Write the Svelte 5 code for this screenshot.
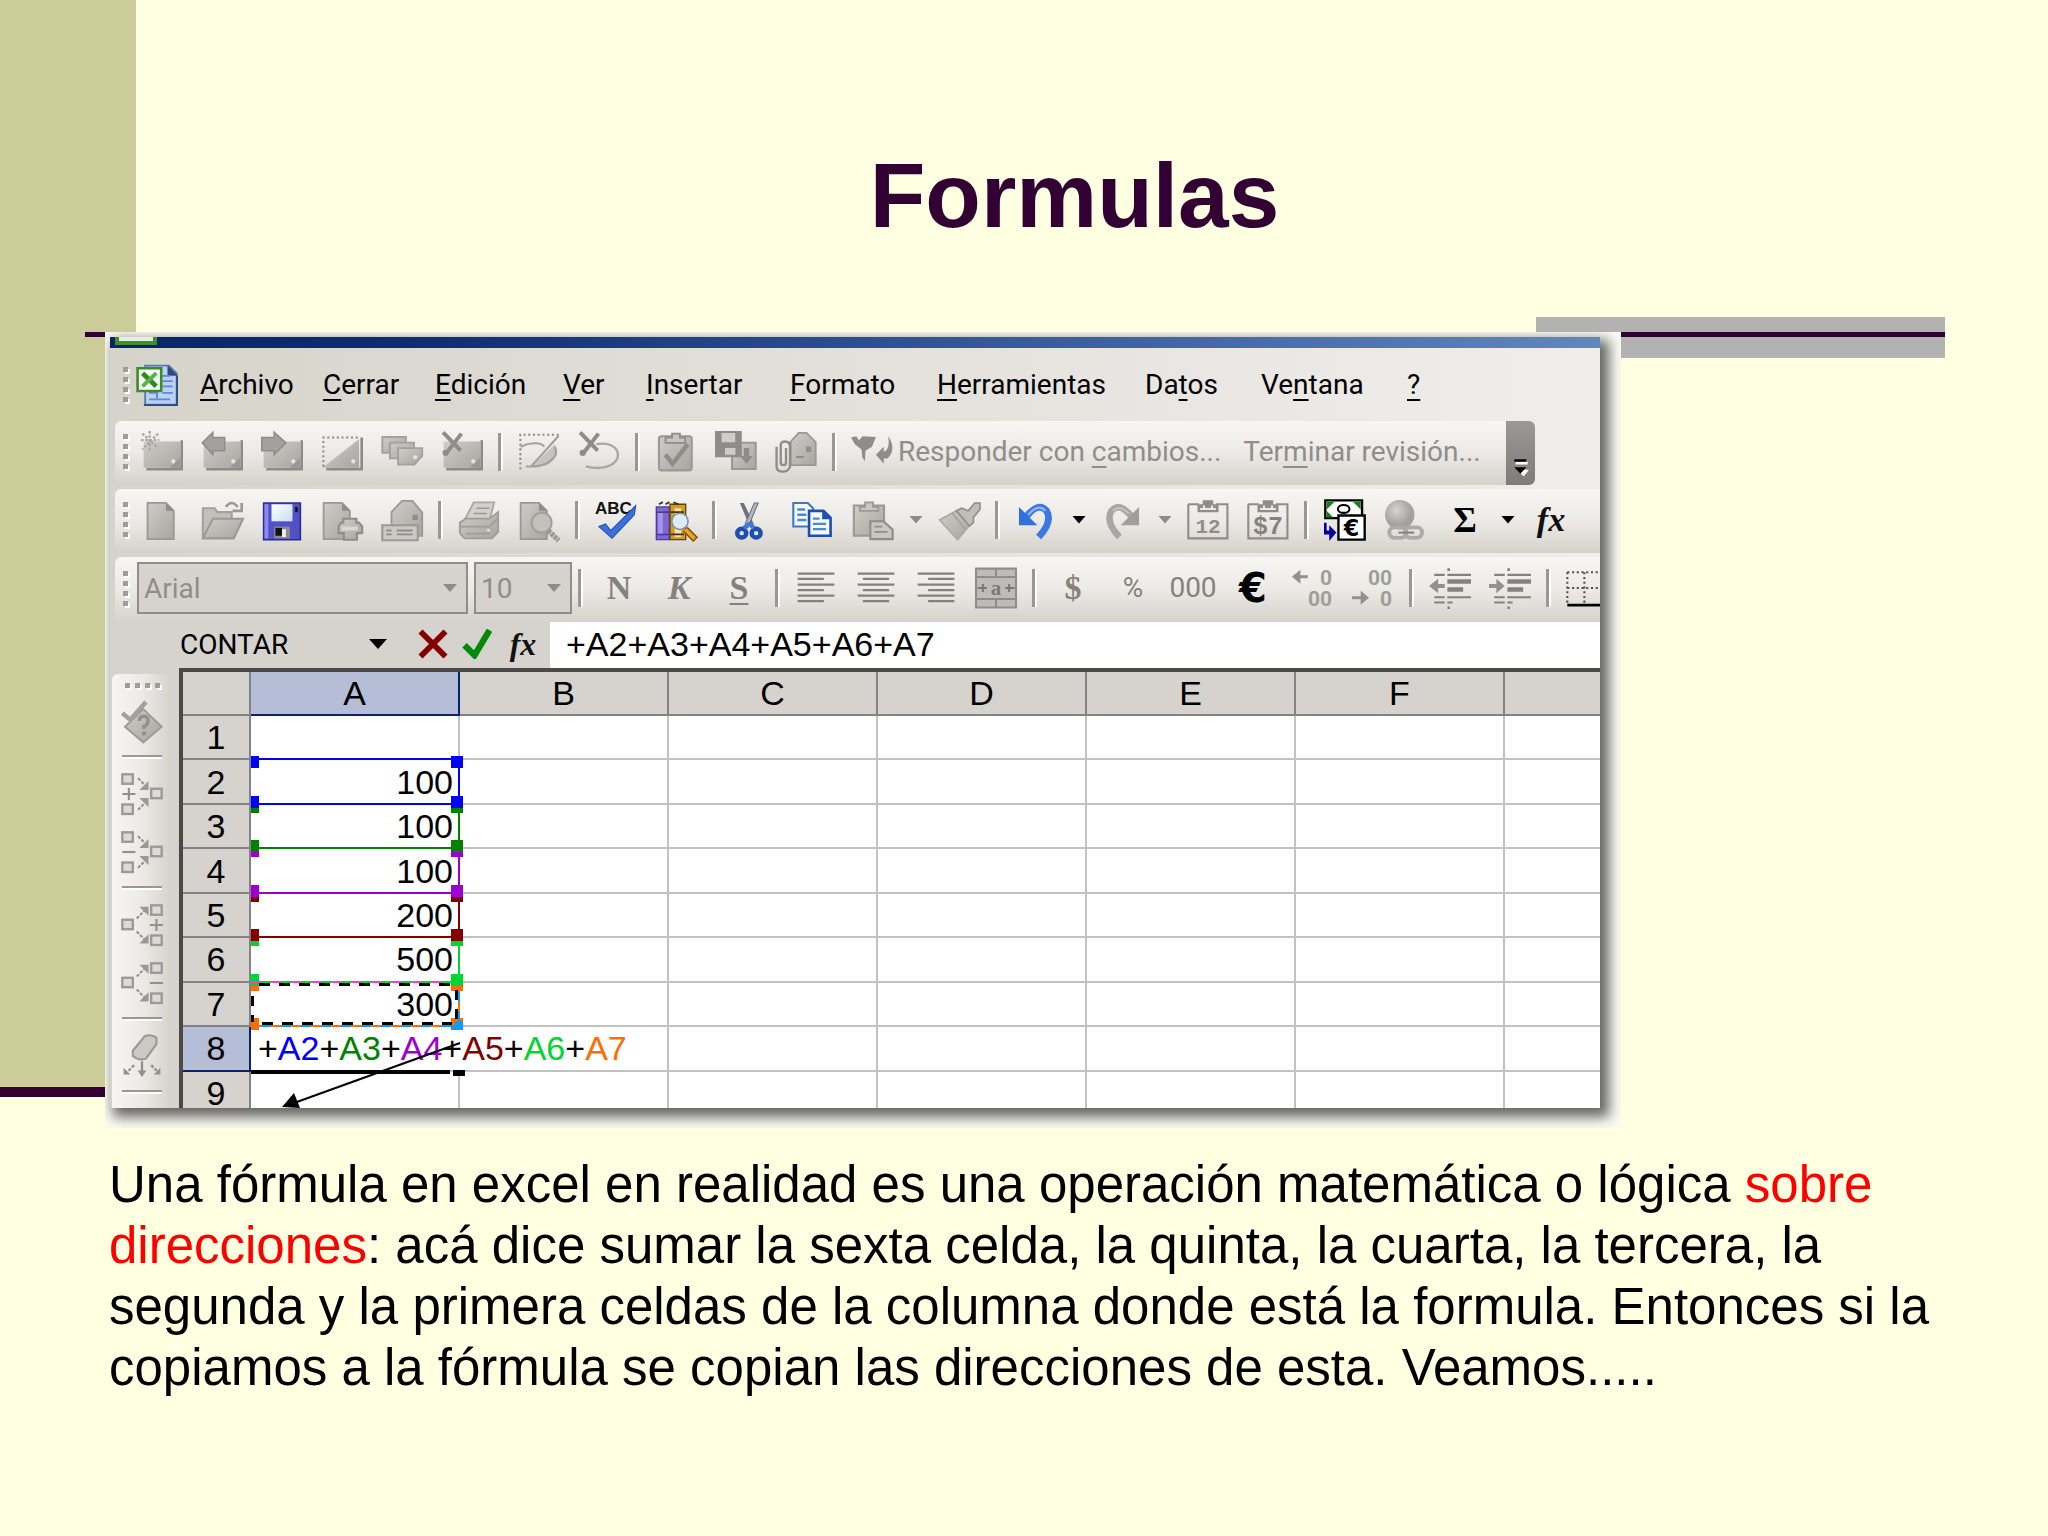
<script>
    const menus = [
        ["", "A", "rchivo"],
        ["", "C", "errar"],
        ["", "E", "dición"],
        ["", "V", "er"],
        ["", "I", "nsertar"],
        ["", "F", "ormato"],
        ["", "H", "erramientas"],
        ["Da", "t", "os"],
        ["Ve", "n", "tana"],
        ["", "?", ""],
    ];

    const note = `<path fill="#8d8b87" d="M15 3.5h1V15H2v-1h13z"/><path fill="url(#grey)" d="M1 4h14v10H1z"/><path fill="#9a9894" d="M11 14l4-4v4z"/><circle cx="12.3" cy="11.6" r=".8" fill="#e6e4e0"/>`;
    const cross = `<path stroke="#8f8d89" stroke-width="1.5" fill="none" d="M.8.5 7.5 7.5M7.8 1 2 8.5"/><circle cx="1.8" cy="8.3" r="1.2" fill="#8f8d89"/>`;
    const page = `<path fill="url(#grey)" stroke="#9b9995" stroke-width=".7" d="M2.5 1.5h7l3 3v10.8h-10z"/><path fill="#8f8d89" d="M9.5 1.5v3h3z"/>`;
    const clipboard = `<path fill="none" stroke="#8f8d89" stroke-width=".8" d="M.5 2h4M11 2h4.4v13H.5V2"/><path fill="#8f8d89" d="M6 .5h4V2h2v3H4V2h2z"/><path stroke="#eceae6" stroke-width=".8" d="M5 3.8h6M6.5 2.5v1.3M9.5 2.5v1.3"/>`;
    const indent = `<path stroke="#85827e" stroke-width=".8" d="M2 3h4M2 11.5h4M2 13.5h4M7 3h9M7 11.5h9M7 13.5h2"/><path stroke="#85827e" stroke-width="1.7" d="M7 5.5h9M7 8.6h6"/><path fill="#85827e" d="M7 .5h1v1H7zM7 15h1v1H7z"/>`;
    const box = (x, y) => `<rect x="${x}" y="${y}" width="4" height="3.6" fill="#dddbd7" stroke="#9c9a96" stroke-width=".9"/>`;

    const icons = {
        noteNew: `${note}<path stroke="#aaa8a3" stroke-width=".9" stroke-dasharray="1 .6" d="M0 3.5h7M3.3 0v8M.5 1l6 5.5M6.5 1l-6 6"/>`,
        notePrev: `${note}<path fill="#a3a19d" stroke="#8f8d89" stroke-width=".6" d="M.5 4.5 4.5.5v2H9v5H4.5v1.5z"/>`,
        noteNext: `${note}<path fill="#a3a19d" stroke="#8f8d89" stroke-width=".6" d="M9.5 4.5 5 .5v2H.3v5H5v1.5z"/>`,
        noteShow: `<path fill="#8d8b87" d="M15 2.5h1V15H2v-1h13z"/><path fill="url(#grey)" d="M1 13.7 14.5 3v11H1z"/><path fill="none" stroke="#8f8d89" stroke-width=".8" stroke-dasharray=".8 1" d="M14 2.5H.9v12"/><circle cx="12.3" cy="11.6" r=".8" fill="#e6e4e0"/>`,
        noteAll: `<g fill="url(#grey)" stroke="#a3a19d" stroke-width=".7"><path d="M.5 2.3h9v6h-9z"/><path d="M3.4 4.4h9.2v6H3.4z"/><path d="M6.5 6.5h9.2v3l-3 3.3H6.5z"/></g><circle cx="13" cy="10" r=".8" fill="#e6e4e0"/>`,
        noteDel: `${note}${cross}`,
        inkShow: `<path fill="none" stroke="#8f8d89" stroke-width=".8" stroke-dasharray=".8 1" d="M15.5 1.4H.9v13.5"/><path fill="#c6c4bf" d="M5 14 14 5c2 3 .6 6-3 8z"/><path fill="none" stroke="#a3a19d" stroke-width=".8" d="M1 6c4-2 8-1.500 9 0M15.500 1.800 5 13.500M14 6c2 4-3 8-11 7.500"/>`,
        inkDel: `<path fill="none" stroke="#a9a7a3" stroke-width=".9" d="M7 5c6-1 9 2 8 5.500-1.500 3-6 4.500-12 3"/>${cross}`,
        task: `<rect x="1.500" y="2" width="12.500" height="13" rx="1" fill="url(#grey)" stroke="#9b9995" stroke-width=".8"/><path fill="#c8c6c1" stroke="#8f8d89" stroke-width=".7" d="M4 4.500h7.500v-2H9.500V1h-3v1.500H4z"/><path fill="none" stroke="#8f8d89" stroke-width="1.700" d="m4 9 2.700 3.500L12.500 5"/>`,
        saveTo: `<path fill="url(#grey)" stroke="#9b9995" stroke-width=".8" d="M6.500 4.500h9v10h-9z"/><path fill="#8f8d89" d="M0 0h10.200v10H0z"/><path fill="#cfcdc8" d="M2.500.8h5.200v3.500H2.500zM3.800 6.500h4V9h-4z"/><path fill="#8f8d89" d="M11 6.500h2v3h1.500L12 12.500 9.500 9.500H11z"/>`,
        attach: `<path fill="url(#grey)" stroke="#9b9995" stroke-width=".7" d="M6 4 9 .7h3l3.500 3.500V13H6z"/><path fill="#8f8d89" d="M11.800 6h2v2h-2zM8 9.500h3v.8H8z"/><path fill="none" stroke="#8f8d89" stroke-width=".9" d="M.6 6v7.500q0 2 2.300 2t2.800-2V6q0-2-1.900-2T2.200 6v6q0 1 1 1t1-1V6.500"/>`,
        reply: `<path fill="#8f8d89" d="M0 2.500 2 2l1 1.500L4.500 2l5 .3L8 6 5.500 7.500l-.2 4-1-1.500L4 7 1.500 5zM9.500 9 12.500 6V8q2.500-1 1.700-6 3.300 5-.3 8.500h-1.400v2z"/>`,
        newPage: page,
        open: `<path fill="#c2c0bb" stroke="#a3a19d" stroke-width=".8" d="M.7 14.500v-11h4.500l1 1.500h5.500v3"/><path fill="url(#grey)" stroke="#9b9995" stroke-width=".8" d="m.7 15 3.800-7.500H16L12.500 15z"/><path fill="none" stroke="#9b9995" d="M9.500 3q2-3 4.500 0M15.500 1.500v3H12"/>`,
        save: `<path fill="#5150c4" stroke="#2b2b94" stroke-width=".6" d="M1 1.500h14v14H1z"/><path fill="#8a8af0" d="M1.300 2h1.500v13H1.300z"/><path fill="url(#label)" d="M4 2h8v6.500H4z"/><path fill="#8c8c8c" d="M5 10.500h6V15H5z"/><path fill="#111" d="M5.500 11H8v3H5.500z"/><path fill="#eee" d="M8 11.500h1.500v3H8z"/><path fill="#111" d="M13 3h1v2h-1z"/>`,
        permission: `<g transform="translate(-1.500 0)">${page}</g><path fill="url(#grey)" stroke="#8f8d89" stroke-width=".8" d="M8.500 9V7.500h5V9h1l1.200 1.500V13h-2v2.500h-5V13h-2v-2.500L7.700 9z"/><path fill="#d9d7d2" d="M8 10.500h6V12H8z"/>`,
        mail: `<path fill="url(#grey)" stroke="#9b9995" stroke-width=".7" d="M4 14V5L8 .7h4l3.700 4.500V14z"/><path fill="#8f8d89" d="M12 6h2v2h-2z"/><path fill="#cbc9c4" stroke="#9b9995" stroke-width=".8" d="M.5 10H14v5.700H.5z"/><path stroke="#8f8d89" stroke-width=".7" d="M2 12h2M2 13.500h2M6 12h6M6 13.500h6"/>`,
        print: `<path fill="#d3d1cc" stroke="#a9a7a2" stroke-width=".7" d="M2.500 8 6 1.300h7.800L12 8z"/><path stroke="#9b9995" stroke-width=".6" d="M7 3.500h5M6 5.500h5"/><path fill="url(#grey)" stroke="#9f9d99" stroke-width=".7" d="M.7 9 3 7.500h9L15.300 5v7.500L13 15H2.500L.7 13z"/><path fill="none" stroke="#9f9d99" stroke-width=".7" d="M1 10.500h11l3-3M3 13.200h9"/><path fill="#e6e4e0" d="M11 11.500h1.200v.8H11z"/>`,
        preview: `<g transform="translate(-1.500 0)">${page}</g><circle cx="9" cy="9" r="3.800" fill="#c3c1bc" stroke="#a3a19d" stroke-width=".8"/><path stroke="#9b9995" stroke-width="2" stroke-dasharray="1.300 .3" d="m11.500 12 4 3.800"/>`,
        spell: `<text x="0" y="5.600" font-family="Liberation Sans" font-weight="bold" font-size="6.500" fill="#111">ABC</text><path fill="#3a6fdc" stroke="#2350b4" stroke-width=".4" d="M1.500 10.500 4 9.500l2 2.500 9.500-9.500-.5 3.500L6.500 15z"/>`,
        research: `<path fill="#7d67d2" stroke="#4a3a9c" stroke-width=".5" d="M.5 3h5v12.500h-5z"/><path fill="#a595ea" d="M1.200 4.500H3v9H1.200z"/><path stroke="#4a3a9c" stroke-width=".6" d="M.5 5h5M.5 13.500h5"/><path fill="#d89c22" stroke="#5b430e" stroke-width=".5" d="M5.700 2h6v13.500h-6z"/><path fill="#f2e3b4" d="M7.500 3.500h2.500v11H7.500z"/><path fill="none" stroke="#443311" stroke-width=".7" d="M6 5h5M6 13.500h5M1.500 2l1.500-.8M4 2l1.500-.8M7 1.300l2 .7"/><circle cx="9.500" cy="8.500" r="3.100" fill="#dcecf8" stroke="#7f93a6" stroke-width=".6"/><path stroke="#7c5410" stroke-width="2.600" d="m11.500 11.500 4 4"/><path stroke="#e9a520" stroke-width="1.400" d="m11.500 11.500 3.600 3.600"/>`,
        cut: `<path fill="#69727e" d="M3 1.500 7 11l1.300-1.500L4.500 1.500z"/><path fill="#b1b8c0" stroke="#69727e" stroke-width=".4" d="M10 1.500 6 11 5 9.500 8.500 1.500z"/><g fill="none" stroke="#1f4fae" stroke-width="1.700"><circle cx="3.700" cy="13" r="1.700"/><circle cx="9.200" cy="13" r="1.700"/></g><path fill="none" stroke="#3f78dd" stroke-width="1.500" d="m4.500 11 2-1.500L8.500 11"/>`,
        copy: `<g fill="#f4faff" stroke="#3f78bb" stroke-width=".8"><path d="M.5 1.500h5.500l2 2v7H.5z"/><path stroke="#1f4fae" stroke-width="1" d="M6.500 4.500h5.500l2.700 2.700v6.800H6.500z"/></g><path fill="#1f4fae" d="M11.500 4.500v3.200h3.200z"/><path stroke="#4b88d5" stroke-width=".9" d="M2 4h3M2 6h3.500M2 8h3.500M8 7.500h2.500M8 9.500h5M8 11.500h5"/>`,
        paste: `<path fill="url(#grey)" stroke="#9b9995" stroke-width=".8" d="M.7 2.500h11.500V14H.7z"/><path fill="#c9c7c2" stroke="#9b9995" stroke-width=".7" d="M3 4.500h7V3H8V1.300H5V3H3z"/><path fill="#c9c7c2" stroke="#8f8d89" stroke-width=".8" d="M7 8.500h5l3.500 3.200v3.600H7z"/><path stroke="#8f8d89" stroke-width=".7" d="M8.500 10.500h3M8.500 12.500h5"/>`,
        brush: `<path fill="url(#grey)" stroke="#aaa8a3" stroke-width=".6" d="M.6 8 7 4.500l5 5.500-4.500 5.500z"/><path fill="#c0beb9" stroke="#8f8d89" stroke-width=".6" d="m7 4.500 2-1 2.500 1L14 1.500h2V4l-2.500 3v2L12 10.300z"/><path stroke="#a3a19d" stroke-width=".6" d="m5.500 5.500 5 6"/>`,
        undo: `<path fill="none" stroke="#3c78e4" stroke-width="2.600" d="M4.500 6.500Q9 1 12 4.500q2.500 4-3 10"/><path fill="#3470dc" d="M1.500 3v7h7z"/><path fill="none" stroke="#8eb8f7" stroke-width=".8" d="M5 6Q9 1.500 11.500 4.500"/>`,
        redo: `<path fill="none" stroke="#a9a7a3" stroke-width="2.500" d="M11.500 6.500Q7 1 4 4.500q-2.500 4 3 10"/><path fill="#a09e9a" d="M14.500 3v7h-7z"/><path fill="none" stroke="#c9c7c2" stroke-width=".7" d="M10.500 5.500Q7 2 4.600 4.500"/>`,
        cal: `${clipboard}<text x="8" y="13" text-anchor="middle" font-family="Liberation Mono" font-weight="bold" font-size="8" fill="#918e8a">12</text>`,
        cal7: `${clipboard}<text x="8" y="13.200" text-anchor="middle" font-family="Liberation Mono" font-weight="bold" font-size="9.500" fill="#85827e">$7</text>`,
        convert: `<path fill="#fff" stroke="#000" stroke-width=".9" d="M.5.500h14v6.800H.5z"/><path fill="#138413" d="M1 1h3L1 4zM14 1h-3l3 3zM1 7V4.500L3.500 7z"/><ellipse cx="7.500" cy="3.800" rx="2.200" ry="1.500" fill="none" stroke="#000" stroke-width=".8"/><path fill="#fff" stroke="#000" stroke-width=".9" d="M5.500 6.300h10v9.200h-10z"/><text x="10.500" y="14" text-anchor="middle" font-family="DejaVu Sans" font-weight="bold" font-size="8.500">€</text><path fill="#00009a" d="M0 9h1v3h1v-2l2.700 2.800L2 16v-2.500H0z"/>`,
        link: `<circle cx="6" cy="6" r="5.600" fill="url(#ball)"/><g fill="none" stroke="#adaba7" stroke-width="1.500"><rect x="2" y="10.800" width="6.500" height="4" rx="2"/><rect x="8" y="10.800" width="6.500" height="4" rx="2"/></g><path stroke="#85827e" stroke-width=".8" d="M5.500 12.800h6"/>`,
        left: `<path stroke="#85827e" stroke-width=".9" d="M1 2.500h14M1 4.500h10M1 6.700h14M1 8.800h10M1 10.900h14M1 13h10"/>`,
        center: `<path stroke="#85827e" stroke-width=".9" d="M1 2.500h14M3 4.500h10M1 6.700h14M3 8.800h10M1 10.900h14M3 13h10"/>`,
        right: `<path stroke="#85827e" stroke-width=".9" d="M1 2.500h14M5 4.500h10M1 6.700h14M5 8.800h10M1 10.900h14M5 13h10"/>`,
        merge: `<path fill="#bebcb8" stroke="#8f8d89" stroke-width=".8" d="M.4.6h15.200v14.800H.4zM.4 3.800h15.200M.4 12.200h15.200M8 .6v3.200M8 12.200v3.200"/><text x="8" y="10.500" text-anchor="middle" font-family="Liberation Serif" font-weight="bold" font-size="8" fill="#7b7975">a</text><path stroke="#7b7975" stroke-width=".8" d="M1 8h3.500M11.500 8H15M3 6.500v3M13 6.500v3"/>`,
        addDec: `<path fill="#93918d" d="M0 3.700 3.200 1V3.100H6v1.200H3.200v2.100z"/><text x="10.700" y="7" font-family="Roboto" font-weight="bold" font-size="8" fill="#a09e9a">0</text><text x="6.100" y="14.700" font-family="Roboto" font-weight="bold" font-size="8" fill="#a09e9a">00</text>`,
        delDec: `<path fill="#93918d" d="M6.500 11.700 3.300 9v2.100H0v1.200h3.300v2.100z"/><text x="6.100" y="7" font-family="Roboto" font-weight="bold" font-size="8" fill="#a09e9a">00</text><text x="10.700" y="14.700" font-family="Roboto" font-weight="bold" font-size="8" fill="#a09e9a">0</text>`,
        outdent: `${indent}<path fill="#93918d" d="M0 7.200 3.500 4.500v2H6v1.500H3.500v2z"/>`,
        indent: `${indent}<path fill="#93918d" d="M6 7.200 2.800 4.500v2H0v1.500h2.800v2z"/>`,
        borders: `<path fill="none" stroke="#55534f" stroke-width=".8" stroke-dasharray=".8 1" d="M.5 2h16M.5 2v12M7 2v12M.5 8h16M13.500 2v12"/><path stroke="#000" stroke-width="1" d="M.5 14.500H16"/>`,
        excel: `<path fill="#bcd0f4" stroke="#5877ae" stroke-width=".7" d="M3.500.6h9l3 3v11.900h-12z"/><path fill="#2c4c7d" d="M12 .5v4h4zM15.300 4h.7v12H3v-.7h12.300z"/><path fill="none" stroke="#5f88d6" stroke-width=".7" d="M10 4.500h3M10 6.500h4M10 8.500h4M5 11h3v2M10 11h4M5 13.500h8"/><path fill="#f3fff0" stroke="#3c8d28" stroke-width="1" d="M.6 1.600h9v8.700h-9z"/><path stroke="#2f8a1f" stroke-width="1.800" d="m2.500 3.500 5.200 5"/><path stroke="#5bb04a" stroke-width="1.500" d="M7.700 3.500 2.500 8.500"/>`,
        audit: `<path fill="url(#grey)" stroke="#9b9995" stroke-width=".7" d="m8.500 3.500 7 6.700-7 6-7-6z"/><path fill="none" stroke="#a3a19d" stroke-width="1.700" d="m.5 5 3 2.500L9.500.8"/><path fill="none" stroke="#93918d" stroke-width="1.300" d="M7 8q0-1.800 1.700-1.800T10.300 8 8.700 10v1"/><path fill="#93918d" d="M8 12h1.600v1.500H8z"/>`,
        tracePrecAdd: `${box(0.5, 0.5)}${box(0.5, 12)}${box(11.5, 6)}<path stroke="#93918d" stroke-width=".8" d="M.5 8h5M3 5.700v4.600"/><path stroke="#93918d" stroke-width=".8" stroke-dasharray="1.200 .6" d="m6.500 2 3.500 3.500M6.500 14 10 10.500"/><path fill="#9b9995" d="M10.500 3v3.500H7zM10.500 13V9.500H7z"/>`,
        tracePrecDel: `${box(0.5, 0.5)}${box(0.5, 12)}${box(11.5, 6)}<path stroke="#93918d" stroke-width=".8" d="M.5 8h5"/><path stroke="#93918d" stroke-width=".8" stroke-dasharray="1.200 .6" d="m6.500 2 3.500 3.500M6.500 14 10 10.500"/><path fill="#9b9995" d="M10.500 3v3.500H7zM10.500 13V9.500H7z"/>`,
        traceDepAdd: `${box(0.5, 6)}${box(11.5, 0.5)}${box(11.5, 12)}<path stroke="#93918d" stroke-width=".8" d="M11 8h5M13.500 5.700v4.600"/><path stroke="#93918d" stroke-width=".8" stroke-dasharray="1.200 .6" d="M6 5.500 9.500 2M6 10.500 9.500 14"/><path fill="#9b9995" d="M7 1h3.500v3.500zM7 15h3.500v-3.500z"/>`,
        traceDepDel: `${box(0.5, 6)}${box(11.5, 0.5)}${box(11.5, 12)}<path stroke="#93918d" stroke-width=".8" d="M11 8h5"/><path stroke="#93918d" stroke-width=".8" stroke-dasharray="1.200 .6" d="M6 5.500 9.500 2M6 10.500 9.500 14"/><path fill="#9b9995" d="M7 1h3.500v3.500zM7 15h3.500v-3.500z"/>`,
        eraser: `<path fill="#cbc9c4" stroke="#9b9995" stroke-width=".8" d="M4.500 6 9 .5q2.500-1 4.500.5v2.500L9.500 9q-2.500 1-5-1z"/><path stroke="#93918d" stroke-width=".9" d="M8 10v5"/><path stroke="#93918d" stroke-width=".9" stroke-dasharray="1.200 .6" d="m5 11.500-3 3M11.500 11.500l3 3"/><path fill="#93918d" d="M6.300 13.500h3.400L8 16zM1 12.500V15h2.500zM15 12.500V15h-2.500z"/>`,
    };

    const reviewBar = ["noteNew", "notePrev", "noteNext", "noteShow", "noteAll", "noteDel", "|", "inkShow", "inkDel", "|", "task", "saveTo", "attach", "|"];
    const standardBar = [
        "newPage", "open", "save", "permission", "mail", "|", "print", "preview", "|", "spell", "research", "|",
        "cut", "copy", "paste", "v", "brush", "|", "undo", "V", "redo", "v", "cal", "cal7", "|",
        "convert", "link", "Σ", "V", "fx",
    ];
    const formatBar = ["|", "N", "K", "S", "|", "left", "center", "right", "merge", "|", "$", "%", "000", "€", "addDec", "delDec", "|", "outdent", "indent", "|", "borders"];
    const auditBar = ["audit", "|", "tracePrecAdd", "tracePrecDel", "|", "traceDepAdd", "traceDepDel", "|", "eraser", "|"];
    const glyphs = { N: "bold", K: "bold italic", S: "bold under", $: "bold", "%": "light", "000": "light", "€": "euro", Σ: "sigma", fx: "fx" };

    const columns = ["A", "B", "C", "D", "E", "F", ""];
    const rows = ["", "100", "100", "100", "200", "500", "300", "", ""];
    const refs = [
        { name: "A2", color: "#0000ff" },
        { name: "A3", color: "#008200" },
        { name: "A4", color: "#9c00ce" },
        { name: "A5", color: "#840000" },
        { name: "A6", color: "#00d532" },
        { name: "A7", color: "#ff6d00" },
    ];
    // row edges inside the sheet, from the top of row 2 to the bottom of row 8
    const edges = [87, 132, 176, 221, 265, 310, 354, 399];

    let formula = "+A2+A3+A4+A5+A6+A7";
</script>

{#snippet tool(name)}
    {#if name === "|"}
        <span class="sep"></span>
    {:else if name === "v" || name === "V"}
        <button class="drop" class:off={name === "v"} aria-label="Más opciones"></button>
    {:else if glyphs[name]}
        <button class="tool glyph {glyphs[name]}">{name}</button>
    {:else}
        <button class="tool" aria-label={name}>
            <svg class="icon" viewBox="0 0 16 16">{@html icons[name]}</svg>
        </button>
    {/if}
{/snippet}

{#snippet grip()}
    <span class="grip"><i></i><i></i><i></i><i></i></span>
{/snippet}

<svg class="defs" aria-hidden="true">
    <defs>
        <linearGradient id="grey" x1="0" y1="0" x2="1" y2="1">
            <stop offset="0" stop-color="#cfcdc8" />
            <stop offset="1" stop-color="#a7a5a0" />
        </linearGradient>
        <linearGradient id="label" x1="0" y1="0" x2="1" y2="1">
            <stop offset="0" stop-color="#fff" />
            <stop offset="1" stop-color="#c8dcf0" />
        </linearGradient>
        <radialGradient id="ball" cx=".4" cy=".35">
            <stop offset="0" stop-color="#d6d4cf" />
            <stop offset="1" stop-color="#a3a19d" />
        </radialGradient>
    </defs>
</svg>

<main class="slide">
    <h1>Formulas</h1>

    <figure>
        <div class="window">
            <div class="titlebar"><span></span></div>

            <nav>
                {@render grip()}
                <svg class="icon" viewBox="0 0 16 16">{@html icons.excel}</svg>
                <div class="menus">
                    {#each menus as [before, key, after]}
                        <button>{before}<u>{key}</u>{after}</button>
                    {/each}
                </div>
            </nav>

            <div class="bars">
                <div class="review">
                    <div class="bar">
                        {@render grip()}
                        {#each reviewBar as name}{@render tool(name)}{/each}
                        <button class="reply">
                            <svg class="icon" viewBox="0 0 16 16">{@html icons.reply}</svg>
                            <span>Responder con <u>c</u>ambios...</span>
                        </button>
                        <button class="finish">Ter<u>m</u>inar revisión...</button>
                    </div>
                    <button class="overflow" aria-label="Opciones de barra">
                        <svg viewBox="0 0 12 14">
                            <path fill="#fff" d="M2 2h9v2H2zM3 8h9l-4 5z" />
                            <path d="M1 0h9v2H1zM1 6h9l-4.500 5z" />
                        </svg>
                    </button>
                </div>
                <div class="bar">
                    {@render grip()}
                    {#each standardBar as name}{@render tool(name)}{/each}
                </div>
                <div class="bar">
                    {@render grip()}
                    <label class="combo font">
                        <select aria-label="Fuente" disabled><option>Arial</option></select>
                    </label>
                    <label class="combo size">
                        <select aria-label="Tamaño" disabled><option>10</option></select>
                    </label>
                    {#each formatBar as name}{@render tool(name)}{/each}
                </div>
            </div>

            <div class="formula">
                <div class="formula-tools">
                    <label class="name-box">
                        <select aria-label="Función"><option>CONTAR</option></select>
                    </label>
                    <button aria-label="Cancelar">
                        <svg viewBox="0 0 12 12"><path fill="none" stroke="#840000" stroke-width="2.300" d="m1 1 10 10M11 1 1 11" /></svg>
                    </button>
                    <button aria-label="Introducir">
                        <svg viewBox="0 0 12 12"><path fill="none" stroke="#008a08" stroke-width="2.500" d="m1 6.500 4 4L11 .5" /></svg>
                    </button>
                    <button class="fx">fx</button>
                </div>
                <input aria-label="Barra de fórmulas" bind:value={formula} />
            </div>

            <div class="work">
                <div class="audit">
                    {@render grip()}
                    {#each auditBar as name}{@render tool(name)}{/each}
                </div>
                <div class="sheet">
                    <table>
                        <colgroup>
                            <col class="row-col" />
                            {#each columns as letter}<col class:data-col={letter} />{/each}
                        </colgroup>
                        <thead>
                            <tr>
                                <th></th>
                                {#each columns as letter}
                                    <th class:active={letter === "A"}>{letter}</th>
                                {/each}
                            </tr>
                        </thead>
                        <tbody>
                            {#each rows as value, i}
                                <tr>
                                    <th class:active={i === 7}>{i + 1}</th>
                                    {#if i === 7}
                                        <td class="editing" colspan="2">
                                            {#each refs as ref}+<span style="color: {ref.color}">{ref.name}</span>{/each}
                                        </td>
                                    {:else}
                                        <td>{value}</td>
                                        <td></td>
                                    {/if}
                                    <td></td><td></td><td></td><td></td><td></td>
                                </tr>
                            {/each}
                        </tbody>
                    </table>

                    <svg class="ranges" viewBox="0 0 290 436" shape-rendering="crispEdges">
                        {#each refs.map((r, i) => ({ ...r, i })).reverse() as { color, i }}
                            <g fill={color}>
                                <rect x="68" y={edges[i] - 1} width="208" height="2" />
                                <rect x="68" y={edges[i + 1] - 1} width="208" height="2" />
                                <rect x="275" y={edges[i]} width="2" height="44" />
                                <rect x="68" y={edges[i] - 3} width="8" height="12" />
                                <rect x="68" y={edges[i + 1] - 8} width="8" height="12" />
                                <rect x="268" y={edges[i] - 3} width="12" height="12" />
                                <rect x="268" y={edges[i + 1] - 8} width="12" height="12" />
                            </g>
                        {/each}
                        <g fill="none" stroke-width="2">
                            <path stroke="#ff3ccc" stroke-dasharray="10 10" d="M68 310h200" />
                            <path stroke="#0a9cff" stroke-dasharray="10 10" d="M78 354h190M276 320v34" />
                            <path stroke="#000" stroke-width="3" stroke-dasharray="11 9" d="M76 312h192M79 351h190" />
                            <path stroke="#000" stroke-width="3" stroke-dasharray="10 9" d="M69 324v26M273 318v30" />
                        </g>
                        <path fill="#0a9cff" d="M272 349h8v9h-12v-5h4z" />
                        <path d="M68 398h199v4H68zM270 398h12v6h-12z" />
                    </svg>
                    <svg class="pointer" viewBox="0 0 180 68">
                        <path stroke="#000" stroke-width="2" d="M178 2 12 62" />
                        <path d="m0 66 12-14 6 15z" />
                    </svg>
                </div>
            </div>
        </div>
    </figure>

    <p>
        Una fórmula en excel en realidad es una operación matemática o lógica <em>sobre direcciones</em>: acá dice sumar la
        sexta celda, la quinta, la cuarta, la tercera, la segunda y la primera celdas de la columna donde está la formula.
        Entonces si la copiamos a la fórmula se copian las direcciones de esta. Veamos.....
    </p>
</main>

<style>
    :global(body) {
        margin: 0;
        background: #ffffe1;
    }

    .slide {
        min-height: 100vh;
        box-sizing: border-box;
        padding: 0 98px 60px 105px;
        font-family: "Liberation Sans", Arial, sans-serif;
        background:
            linear-gradient(#330033, #330033) right 103px top 332px / calc(100% - 188px) 5px no-repeat,
            linear-gradient(#b2b2b2, #b2b2b2) right 103px top 317px / 409px 41px no-repeat,
            linear-gradient(#330033, #330033) left top 1087px / 120px 10px no-repeat,
            linear-gradient(#cccc99, #cccc99) left top / 136px 1087px no-repeat,
            #ffffe1;
    }

    .defs {
        position: absolute;
        width: 0;
        height: 0;
    }

    h1 {
        margin: 0;
        padding: 144px 0 84px 94px;
        color: #330033;
        font-size: 91px;
        line-height: 104px;
        text-align: center;
    }

    figure {
        margin: 0 329px 0 0;
        padding: 5px 21px 20px 5px;
        overflow: hidden;
        background: #fbfbf4;
    }

    p {
        margin: 0;
        padding: 26px 0 0 4px;
        color: #000;
        font-size: 51px;
        line-height: 61px;
    }

    em {
        color: #ff0000;
        font-style: normal;
    }

    button,
    select,
    input {
        margin: 0;
        padding: 0;
        border: 0;
        border-radius: 0;
        background: none;
        color: inherit;
        font: inherit;
        appearance: none;
    }

    .window {
        overflow: hidden;
        background: linear-gradient(90deg, #d6d3ca, #f0eeec);
        box-shadow: 6px 6px 12px 3px rgba(0, 0, 0, 0.6);
        font-family: Roboto, "Open Sans", sans-serif;
        font-size: 28px;
    }

    .titlebar {
        height: 11px;
        padding-left: 5px;
        background: linear-gradient(90deg, #0a246a, #0f2b73 20%, #6286bd);
    }

    .titlebar span {
        display: block;
        box-sizing: border-box;
        width: 42px;
        height: 8px;
        border: 4px solid #3f8d32;
        border-top: 0;
        background: #e3f0dc;
    }

    nav {
        display: flex;
        align-items: center;
        height: 73px;
        padding-left: 13px;
    }

    .menus {
        display: grid;
        grid-template-columns: 123px 112px 128px 83px 144px 147px 208px 116px 146px auto;
        margin-left: 22px;
        justify-items: start;
    }

    u {
        text-decoration-thickness: 2px;
        text-underline-offset: 5px;
    }

    .grip {
        display: flex;
        flex: none;
        flex-direction: column;
        gap: 5px;
        width: 13px;
    }

    .grip i {
        width: 5px;
        height: 5px;
        background: #a09d98;
        box-shadow: 2px 2px #fff;
    }

    .icon {
        flex: none;
        width: 42px;
        height: 42px;
        overflow: visible;
    }

    .bars {
        display: grid;
        gap: 4px;
        padding-left: 5px;
    }

    .bar {
        display: flex;
        align-items: center;
        box-sizing: border-box;
        height: 64px;
        overflow: hidden;
        padding: 0 0 3px 8px;
        border-radius: 6px 0 0 6px;
        background: linear-gradient(#f8f6f3, #eceae6 50%, #d5d2cb);
    }

    .bar:last-child {
        height: 65px;
    }

    .tool {
        display: grid;
        flex: none;
        place-items: center;
        width: 60px;
        height: 48px;
    }

    .bar > .grip + .tool {
        margin-left: -4px;
    }

    .sep {
        flex: none;
        box-sizing: border-box;
        width: 17px;
        height: 38px;
        border-left: 6px solid transparent;
        background: linear-gradient(90deg, #9b9894 3px, #fff 3px 5px, transparent 5px) no-repeat;
    }

    .drop {
        display: grid;
        flex: none;
        place-items: center;
        width: 26px;
        height: 28px;
    }

    .drop::before,
    .combo::after,
    .name-box::after {
        content: "";
        width: 14px;
        height: 8px;
        background: #000;
        clip-path: polygon(0 0, 100% 0, 50% 100%);
    }

    .drop.off::before,
    .combo::after {
        background: #8f8b86;
    }

    .glyph {
        color: #85827e;
        font-family: "Liberation Serif", serif;
        font-size: 34px;
        line-height: 40px;
    }

    .bold {
        font-weight: bold;
    }

    .italic,
    .fx {
        font-style: italic;
    }

    .under {
        text-decoration: underline 2px;
        text-underline-offset: 4px;
    }

    .light {
        font-family: Roboto, sans-serif;
        font-size: 28px;
    }

    .euro {
        color: #000;
        font-family: "DejaVu Sans", sans-serif;
        font-size: 40px;
        font-weight: bold;
    }

    .sigma {
        color: #000;
        font-size: 36px;
        font-weight: bold;
    }

    .fx {
        color: #111;
        font-family: "Liberation Serif", serif;
        font-size: 34px;
        font-weight: bold;
    }

    .review {
        display: flex;
        margin-right: 65px;
    }

    .review .bar {
        flex: 1;
    }

    .reply {
        display: flex;
        flex: none;
        align-items: center;
        gap: 5px;
        margin-left: 8px;
    }

    .reply,
    .finish {
        color: #918d88;
        white-space: nowrap;
    }

    .finish {
        margin-left: 22px;
    }

    .overflow {
        display: flex;
        flex: none;
        align-items: flex-end;
        justify-content: center;
        box-sizing: border-box;
        width: 29px;
        height: 64px;
        padding-bottom: 7px;
        border-radius: 0 6px 6px 0;
        background: linear-gradient(#9a9996, #7d7c7a);
    }

    .overflow svg {
        width: 16px;
        height: 19px;
    }

    .combo,
    .name-box {
        display: grid;
        flex: none;
        align-items: center;
        justify-items: end;
    }

    .combo {
        box-sizing: border-box;
        height: 52px;
        margin-right: 6px;
        border: 2px solid #918e8a;
        background: #d6d3ce;
        color: #918d88;
    }

    .combo select,
    .combo::after,
    .name-box select,
    .name-box::after {
        grid-area: 1 / 1;
    }

    .combo::after {
        margin-right: 9px;
    }

    .combo select,
    .name-box select {
        width: 100%;
        padding-left: 5px;
        opacity: 1;
    }

    .font {
        width: 331px;
        margin-left: 1px;
    }

    .size {
        width: 98px;
        margin-right: 0;
    }

    .formula {
        display: flex;
        height: 46px;
        background: #fff;
    }

    .formula-tools {
        display: flex;
        align-items: center;
        box-sizing: border-box;
        width: 440px;
        padding: 0 0 2px 65px;
        background: #d6d3ce;
    }

    .name-box {
        width: 212px;
        margin-right: 31px;
    }

    .name-box::after {
        width: 18px;
        height: 10px;
    }

    .formula-tools button {
        width: 50px;
        text-align: left;
    }

    .formula-tools svg {
        display: block;
        width: 30px;
        height: 30px;
    }

    .formula-tools .fx {
        padding-left: 4px;
        font-size: 32px;
        line-height: 40px;
    }

    .formula input {
        flex: 1;
        min-width: 0;
        padding: 0 0 2px 16px;
        font-family: "Liberation Sans", Arial, sans-serif;
        font-size: 34px;
    }

    .work {
        display: flex;
        height: 440px;
        background: #d6d3ce;
    }

    .audit {
        display: flex;
        flex: none;
        flex-direction: column;
        align-items: center;
        width: 60px;
        margin: 6px 7px 0 2px;
        padding-top: 9px;
        box-sizing: border-box;
        border-radius: 6px 6px 0 0;
        background: linear-gradient(90deg, #f8f6f3, #eceae6 50%, #d5d2cb);
    }

    .audit .grip {
        flex-direction: row;
        width: 35px;
        margin-bottom: 4px;
    }

    .audit .tool {
        height: 58px;
    }

    .audit .sep {
        width: 40px;
        height: 15px;
        border-top: 5px solid transparent;
        border-left: 0;
        background: linear-gradient(#9b9894 2px, #fff 2px 4px, transparent 4px) no-repeat;
    }

    .sheet {
        position: relative;
        flex: 1;
        min-width: 0;
        overflow: hidden;
        border-top: 4px solid #4a4946;
        border-left: 4px solid #4a4946;
        background: #fff;
        font-family: "Liberation Sans", Arial, sans-serif;
        font-size: 34px;
    }

    table {
        width: 100%;
        height: 444px;
        border-spacing: 0;
        table-layout: fixed;
    }

    .row-col {
        width: 68px;
    }

    .data-col {
        width: 209px;
    }

    th,
    td {
        padding: 0 5px;
        border: 0 solid #c3c1c3;
        border-width: 0 2px 2px 0;
        line-height: 40px;
        text-align: right;
        white-space: nowrap;
    }

    thead th {
        height: 42px;
    }

    th {
        border-color: #848284;
        background: #d6d3ce;
        font-size: 34px;
        font-weight: normal;
        text-align: center;
    }

    tr > :last-child {
        border-right: 0;
    }

    .active {
        border-color: #0a246a;
        background: #b5bed6;
    }

    .editing {
        padding-left: 7px;
        text-align: left;
    }

    .ranges,
    .pointer {
        position: absolute;
    }

    .ranges {
        top: 0;
        left: 0;
        width: 290px;
        height: 436px;
    }

    .pointer {
        top: 369px;
        left: 99px;
        width: 180px;
        height: 68px;
    }
</style>
